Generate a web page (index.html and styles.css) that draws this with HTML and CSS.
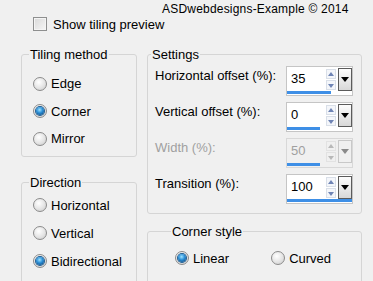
FILE: index.html
```html
<!doctype html>
<html lang="en">
  <head>
    <meta charset="utf-8" />
    <title>Tiling settings</title>
    <link rel="stylesheet" href="styles.css">
  </head>
  <body>
    <div class="dialog">
      <div class="credit">ASDwebdesigns-Example © 2014</div>
      <label class="check">
        <span class="check-box"></span>
        <span>Show tiling preview</span>
      </label>

      <div class="columns">
        <div class="col col-left">
          <fieldset class="group group-tiling">
            <legend>Tiling method</legend>
            <div class="radios">
              <label class="radio"><span class="radio-dot"></span>Edge</label>
              <label class="radio"><span class="radio-dot on"></span>Corner</label>
              <label class="radio"><span class="radio-dot"></span>Mirror</label>
            </div>
          </fieldset>
          <fieldset class="group group-direction">
            <legend>Direction</legend>
            <div class="radios">
              <label class="radio"><span class="radio-dot"></span>Horizontal</label>
              <label class="radio"><span class="radio-dot"></span>Vertical</label>
              <label class="radio"><span class="radio-dot on"></span>Bidirectional</label>
            </div>
          </fieldset>
        </div>

        <div class="col col-right">
          <fieldset class="group group-settings">
            <legend>Settings</legend>
            <div class="row">
              <span class="row-label">Horizontal offset (%):</span>
              <div class="spin">
                <div class="spin-top">
                  <span class="spin-value">35</span>
                  <span class="spin-arrows"><i class="up"></i><i class="down"></i></span>
                  <span class="spin-drop"></span>
                </div>
                <div class="spin-bar"><span style="width: 67.5%"></span></div>
              </div>
            </div>
            <div class="row">
              <span class="row-label">Vertical offset (%):</span>
              <div class="spin">
                <div class="spin-top">
                  <span class="spin-value">0</span>
                  <span class="spin-arrows"><i class="up"></i><i class="down"></i></span>
                  <span class="spin-drop"></span>
                </div>
                <div class="spin-bar"><span style="width: 50%"></span></div>
              </div>
            </div>
            <div class="row disabled">
              <span class="row-label">Width (%):</span>
              <div class="spin">
                <div class="spin-top">
                  <span class="spin-value">50</span>
                  <span class="spin-arrows"><i class="up"></i><i class="down"></i></span>
                  <span class="spin-drop"></span>
                </div>
                <div class="spin-bar"><span style="width: 50%"></span></div>
              </div>
            </div>
            <div class="row">
              <span class="row-label">Transition (%):</span>
              <div class="spin">
                <div class="spin-top">
                  <span class="spin-value">100</span>
                  <span class="spin-arrows"><i class="up"></i><i class="down"></i></span>
                  <span class="spin-drop"></span>
                </div>
                <div class="spin-bar"><span style="width: 100%"></span></div>
              </div>
            </div>
          </fieldset>
          <fieldset class="group group-corner">
            <legend>Corner style</legend>
            <div class="radios radios-row">
              <label class="radio"><span class="radio-dot on"></span>Linear</label>
              <label class="radio"><span class="radio-dot"></span>Curved</label>
            </div>
          </fieldset>
        </div>
      </div>
    </div>
  </body>
</html>
```

FILE: styles.css
```css
*, *::before, *::after {
  box-sizing: border-box;
}

html, body {
  margin: 0;
  padding: 0;
}

body {
  background: #f0f0f0;
  color: #000;
  font: 13px/15px "Liberation Sans", Arial, sans-serif;
}

.dialog {
  width: 373px;
  height: 281px;
  overflow: hidden;
  padding: 2px 0 0 21px;
}

.credit {
  font-size: 12px;
  letter-spacing: 0.2px;
  line-height: 14px;
  padding-left: 141px;
}

.check {
  display: flex;
  align-items: center;
  gap: 6px;
  margin: 1px 0 0 12px;
  height: 14px;
}

.check-box {
  width: 14px;
  height: 14px;
  border: 1px solid #8e8f8f;
  background: linear-gradient(135deg, #d9d9d9, #f6f6f6);
  box-shadow: inset 0 0 0 1px #f4f4f4;
}

.columns {
  display: flex;
  gap: 10px;
  margin-top: 17px;
}

.col {
  display: flex;
  flex-direction: column;
}

.col-left {
  width: 116px;
  gap: 19px;
}

.col-right {
  width: 215px;
  gap: 11px;
}

.group {
  margin: 0;
  padding: 0 0 0 11px;
  border: 1px solid #d5d5d5;
  border-radius: 3px;
  min-inline-size: 0;
}

.group legend {
  padding: 0 1px;
  margin-left: -4px;
  line-height: 13px;
}

.radios {
  display: flex;
  flex-direction: column;
}

.radio {
  display: flex;
  align-items: center;
  gap: 4px;
  height: 28px;
}

.radio-dot {
  width: 14px;
  height: 14px;
  border-radius: 50%;
  border: 1px solid #8b8b8b;
  background: radial-gradient(circle at 40% 35%, #ffffff, #e4e4e4 55%, #c8c8c8);
  position: relative;
}

.radio-dot.on::after {
  content: "";
  position: absolute;
  left: 2px;
  top: 2px;
  width: 8px;
  height: 8px;
  border-radius: 50%;
  background: radial-gradient(circle at 45% 35%, #9fe3ff, #2a8ed6 45%, #0b3d6e);
  box-shadow: 0 0 0 1px #1b5c92;
}

.group-tiling {
  height: 109px;
}

.group-tiling .radios {
  padding-top: 9px;
}

.group-tiling .radio {
  height: 27.5px;
}

.group-direction {
  height: 120px;
}

.group-direction .radios {
  padding-top: 2px;
}

.group-settings {
  height: 166px;
  padding: 5px 8px 0 7px;
}

.row {
  display: flex;
  align-items: flex-start;
  justify-content: space-between;
  margin-bottom: 6px;
}

.row-label {
  padding-top: 2px;
}

.row.disabled .row-label,
.row.disabled .spin-value {
  color: #a0a0a0;
}

.spin {
  width: 67px;
  height: 30px;
  border: 1px solid #c5c5c5;
  background: #fff;
  display: flex;
  flex-direction: column;
}

.spin-top {
  flex: 1;
  display: flex;
  align-items: flex-start;
  padding: 1px 0 0 4px;
}

.spin-value {
  flex: 1;
  padding-top: 3px;
}

.spin-arrows {
  width: 10px;
  display: flex;
  flex-direction: column;
  gap: 1px;
  margin-top: 1px;
}

.spin-arrows i {
  height: 10px;
  border: 1px solid #d9dfe8;
  background: #f4f6fa;
  position: relative;
}

.spin-arrows i::after {
  content: "";
  position: absolute;
  left: 1px;
  border-left: 3px solid transparent;
  border-right: 3px solid transparent;
}

.spin-arrows .up::after {
  top: 2px;
  border-bottom: 4px solid #6f84b5;
}

.spin-arrows .down::after {
  top: 3px;
  border-top: 4px solid #6f84b5;
}

.spin-drop {
  width: 14px;
  height: 23px;
  margin-left: 2px;
  border: 1px solid #5b5b5b;
  background: linear-gradient(#fdfdfd, #d8d8d8);
  position: relative;
}

.spin-drop::after {
  content: "";
  position: absolute;
  left: 2px;
  top: 8px;
  border-left: 4px solid transparent;
  border-right: 4px solid transparent;
  border-top: 5px solid #000;
}

.spin-bar {
  height: 3px;
  margin: 0 0 1px 0;
}

.spin-bar span {
  display: block;
  height: 3px;
  background: #3e8fe6;
}

.row.disabled .spin {
  border-color: #d8d8d8;
  background: #f0f0f0;
}

.row.disabled .spin-arrows i {
  border-color: #e2e2e2;
  background: #f0f0f0;
}

.row.disabled .spin-arrows .up::after {
  border-bottom-color: #b8b8b8;
}

.row.disabled .spin-arrows .down::after {
  border-top-color: #b8b8b8;
}

.row.disabled .spin-drop {
  border-color: #c8c8c8;
  background: #f0f0f0;
}

.row.disabled .spin-drop::after {
  border-top-color: #8a8a8a;
}

.group-corner {
  height: 60px;
  padding-left: 27px;
}

.radios-row {
  flex-direction: row;
  gap: 42px;
  padding-top: 6px;
}
```
